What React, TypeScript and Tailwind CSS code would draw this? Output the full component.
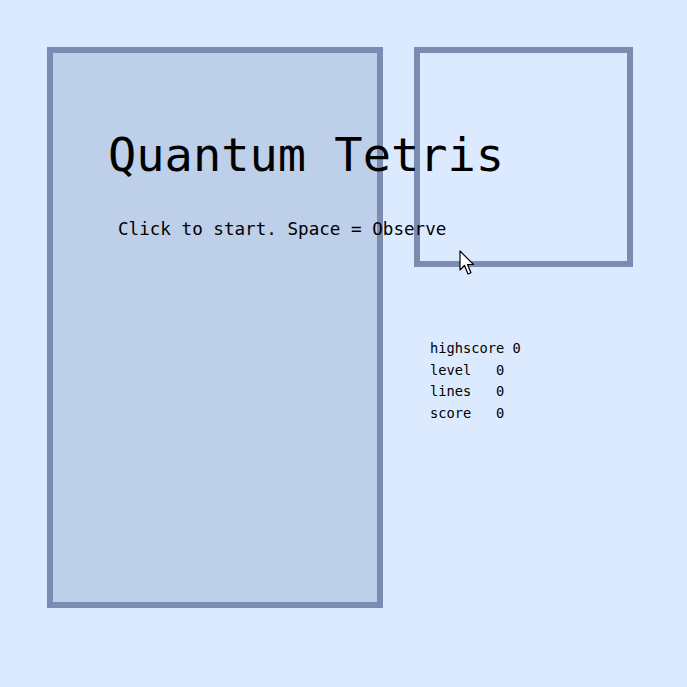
import React from "react";

export default function App() {
  const mono = { fontFamily: '"DejaVu Sans Mono", "Liberation Mono", monospace' };
  return (
    <div className="relative h-[687px] w-full overflow-hidden bg-[#dbeafe] text-black" style={mono}>
      <div className="flex items-start gap-[31px] pl-[47px] pt-[47px]">
        <div className="h-[561px] w-[336px] border-[6px] border-[#7b8cb0] bg-[#bdcfe9]" />
        <div className="flex flex-col">
          <div className="h-[220px] w-[219px] border-[6px] border-[#7b8cb0]" />
          <pre
            className="mt-[71px] pl-[16px] text-[13.7px] leading-[21.7px]"
            style={mono}
          >{`highscore 0
level   0
lines   0
score   0`}</pre>
        </div>
      </div>
      <div className="absolute left-[108px] top-[131px] whitespace-pre text-[47px] leading-none">
        Quantum Tetris
      </div>
      <div className="absolute left-[118px] top-[221px] whitespace-pre text-[17.6px] leading-none">
        Click to start. Space = Observe
      </div>
      <svg
        className="absolute left-[459px] top-[250px]"
        width="18"
        height="26"
        viewBox="0 0 18 26"
      >
        <path
          d="M1 1 L1 20 L5.5 15.5 L9 24 L12 22.7 L8.5 14.5 L14.5 14.5 Z"
          fill="#fff"
          stroke="#000"
          strokeWidth="1.2"
          strokeLinejoin="round"
        />
      </svg>
    </div>
  );
}
